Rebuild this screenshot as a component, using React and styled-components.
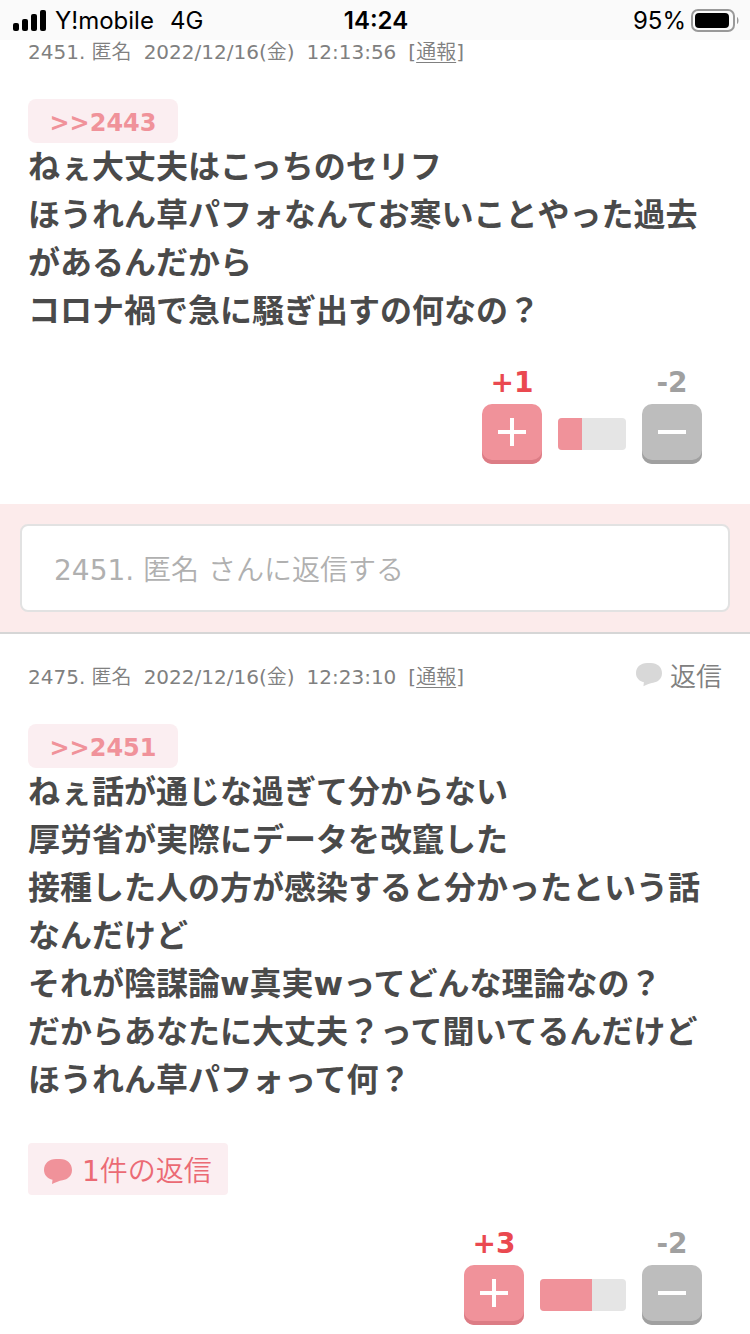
import React from "react";
import styled, { createGlobalStyle } from "styled-components";

const GlobalStyle = createGlobalStyle`
  * {
    box-sizing: border-box;
  }

  body {
    margin: 0;
    background: #fff;
    color: #4a4a4a;
    font-family: Verdana, "DejaVu Sans", "Noto Sans CJK JP", sans-serif;
  }

  button,
  input {
    font-family: inherit;
  }
`;

const lightFont = `Verdana, "DejaVu Sans", "Noto Sans CJK JP DemiLight", "Noto Sans CJK JP Light", "Noto Sans CJK JP", sans-serif`;

const StatusBar = styled.header`
  display: grid;
  grid-template-columns: 1fr auto 1fr;
  align-items: center;
  height: 40px;
  padding: 0 11px 0 13px;
  background: #fafafa;
  color: #000;
  font-family: Inter, sans-serif;
  font-size: 24px;
  line-height: 42px;
`;

const Carrier = styled.div`
  display: flex;
  align-items: center;
  gap: 8px;

  svg {
    margin-bottom: 2px;
  }
`;

const Network = styled.span`
  margin-left: 8px;
`;

const Clock = styled.time`
  font-weight: 600;
`;

const Battery = styled.div`
  display: flex;
  align-items: center;
  justify-content: flex-end;
  gap: 5px;
`;

const Comment = styled.article`
  padding: ${(props) => (props.$first ? "0 28px 40px" : "31px 28px 8px")};
`;

const CommentHead = styled.header`
  display: flex;
  justify-content: space-between;
  align-items: center;
  height: 24px;
  margin-bottom: 35px;
`;

const Meta = styled.div`
  display: flex;
  gap: 12px;
  color: #808080;
  font-family: ${lightFont};
  font-size: 20px;
  line-height: 24px;
  white-space: nowrap;
`;

const ReportLink = styled.a`
  color: inherit;
  text-decoration-thickness: 1px;
  text-underline-offset: 3px;
`;

const ReplyLink = styled.a`
  display: flex;
  align-items: center;
  gap: 8px;
  color: #808080;
  font-family: ${lightFont};
  font-size: 26px;
  line-height: 24px;
  text-decoration: none;

  svg {
    margin-bottom: 4px;
  }
`;

const Anchor = styled.a`
  display: block;
  width: fit-content;
  min-width: 150px;
  border-radius: 8px;
  background: #fbeef1;
  color: #f0929a;
  font-size: 24px;
  font-weight: 700;
  line-height: 48px;
  height: 44px;
  text-align: center;
  text-decoration: none;
`;

const Body = styled.p`
  margin: 0;
  font-size: 32px;
  font-weight: 700;
  line-height: 48px;
`;

const RepliesButton = styled.button`
  display: flex;
  align-items: center;
  gap: 10px;
  height: 52px;
  margin: 39px 0 33px;
  padding: 0 16px;
  border: 0;
  border-radius: 4px;
  background: #fbeef1;
  color: #eb6a74;
  font-family: ${lightFont};
  font-size: 28px;

  svg {
    margin-top: 6px;
  }
`;

const Votes = styled.div`
  display: flex;
  justify-content: flex-end;
  align-items: flex-end;
  gap: 16px;
  padding-right: 20px;

  ${Body} + & {
    margin-top: 32px;
  }
`;

const Vote = styled.div`
  display: flex;
  flex-direction: column;
  align-items: center;
  gap: 5px;
  width: 60px;
`;

const Count = styled.span`
  color: ${(props) => (props.$plus ? "#ea4950" : "#a0a0a0")};
  font-size: 28px;
  font-weight: 700;
  line-height: 32px;
`;

const VoteButton = styled.button`
  display: block;
  width: 60px;
  height: 60px;
  padding: 0 0 4px;
  border: 0;
  border-radius: 10px;
  background: ${(props) => (props.$plus ? "#f0929a" : "#bdbdbd")};
  box-shadow: inset 0 -4px ${(props) => (props.$plus ? "#dc7c85" : "#a0a0a0")};

  svg {
    display: block;
    margin: 0 auto;
  }
`;

const Bar = styled.div`
  height: 32px;
  margin-bottom: 14px;
  border-radius: 4px;
  background: #e5e5e5;
  overflow: hidden;
`;

const BarFill = styled.div`
  height: 100%;
  background: #f0929a;
`;

const ReplyForm = styled.form`
  padding: 20px;
  border-bottom: 2px solid #d6d6d6;
  background: #fcebeb;
`;

const ReplyInput = styled.input`
  display: block;
  width: 100%;
  height: 88px;
  padding: 4px 32px 0;
  border: 2px solid #e2e2e2;
  border-radius: 8px;
  background: #fff;
  color: #4a4a4a;
  font-family: ${lightFont};
  font-size: 28px;

  &::placeholder {
    color: #b0b0b0;
    opacity: 1;
  }
`;

const SignalIcon = () => (
  <svg width="34" height="22" viewBox="0 0 34 22" aria-hidden="true">
    <rect x="0" y="14" width="6" height="8" rx="2" />
    <rect x="9" y="10" width="6" height="12" rx="2" />
    <rect x="18" y="5" width="6" height="17" rx="2" />
    <rect x="27" y="1" width="6" height="21" rx="2" />
  </svg>
);

const BatteryIcon = () => (
  <svg width="48" height="24" viewBox="0 0 48 24" aria-hidden="true">
    <rect x="1" y="1" width="42" height="21" rx="6" fill="none" stroke="#999" strokeWidth="2" />
    <rect x="4" y="4" width="34" height="15" rx="4" />
    <path d="M46 8c2 1 2 6 0 7z" fill="#999" />
  </svg>
);

const BubbleIcon = ({ width, color }) => (
  <svg width={width} height={width * 0.9} viewBox="0 0 28 25" fill={color} aria-hidden="true">
    <path d="M12 0h4c7 0 12 4.500 12 11 0 6-4.500 9.500-9.500 10.200-3.500.5-6.500 2-10.500 3.800l.500-4.300C3.500 19.500 0 16 0 11 0 4.500 5 0 12 0z" />
  </svg>
);

const VoteIcon = ({ plus }) => (
  <svg width="28" height="28" viewBox="0 0 28 28" stroke="#fff" strokeWidth="4" aria-hidden="true">
    <path d={plus ? "M0 14h28M14 0v28" : "M0 14h28"} />
  </svg>
);

const CommentMeta = ({ id, date, time }) => (
  <Meta>
    <span>{id}. 匿名</span>
    <span>{date}</span>
    <time>{time}</time>
    <span>
      [<ReportLink href="#report">通報</ReportLink>]
    </span>
  </Meta>
);

const VoteRow = ({ plus, minus, width, ratio }) => (
  <Votes>
    <Vote>
      <Count $plus>+{plus}</Count>
      <VoteButton type="button" $plus aria-label="プラス">
        <VoteIcon plus />
      </VoteButton>
    </Vote>
    <Bar style={{ width }}>
      <BarFill style={{ width: `${ratio}%` }} />
    </Bar>
    <Vote>
      <Count>-{minus}</Count>
      <VoteButton type="button" aria-label="マイナス">
        <VoteIcon />
      </VoteButton>
    </Vote>
  </Votes>
);

const App = () => (
  <>
    <GlobalStyle />
    <StatusBar>
      <Carrier>
        <SignalIcon />
        <span>Y!mobile</span>
        <Network>4G</Network>
      </Carrier>
      <Clock>14:24</Clock>
      <Battery>
        <span>95%</span>
        <BatteryIcon />
      </Battery>
    </StatusBar>
    <main>
      <Comment $first>
        <CommentHead>
          <CommentMeta id={2451} date="2022/12/16(金)" time="12:13:56" />
        </CommentHead>
        <Anchor href="#comment2443">&gt;&gt;2443</Anchor>
        <Body>
          ねぇ大丈夫はこっちのセリフ
          <br />
          ほうれん草パフォなんてお寒いことやった過去があるんだから
          <br />
          コロナ禍で急に騒ぎ出すの何なの？
        </Body>
        <VoteRow plus={1} minus={2} width={68} ratio={35} />
      </Comment>
      <ReplyForm>
        <ReplyInput
          type="text"
          placeholder="2451. 匿名 さんに返信する"
          aria-label="2451. 匿名 さんに返信する"
        />
      </ReplyForm>
      <Comment>
        <CommentHead>
          <CommentMeta id={2475} date="2022/12/16(金)" time="12:23:10" />
          <ReplyLink href="#reply">
            <BubbleIcon width={26} color="#d8d8d8" />
            返信
          </ReplyLink>
        </CommentHead>
        <Anchor href="#comment2451">&gt;&gt;2451</Anchor>
        <Body>
          ねぇ話が通じな過ぎて分からない
          <br />
          厚労省が実際にデータを改竄した
          <br />
          接種した人の方が感染すると分かったという話なんだけど
          <br />
          それが陰謀論w真実wってどんな理論なの？
          <br />
          だからあなたに大丈夫？って聞いてるんだけど
          <br />
          ほうれん草パフォって何？
        </Body>
        <RepliesButton type="button">
          <BubbleIcon width={28} color="#f0929a" />
          1件の返信
        </RepliesButton>
        <VoteRow plus={3} minus={2} width={86} ratio={60} />
      </Comment>
    </main>
  </>
);

export default App;
